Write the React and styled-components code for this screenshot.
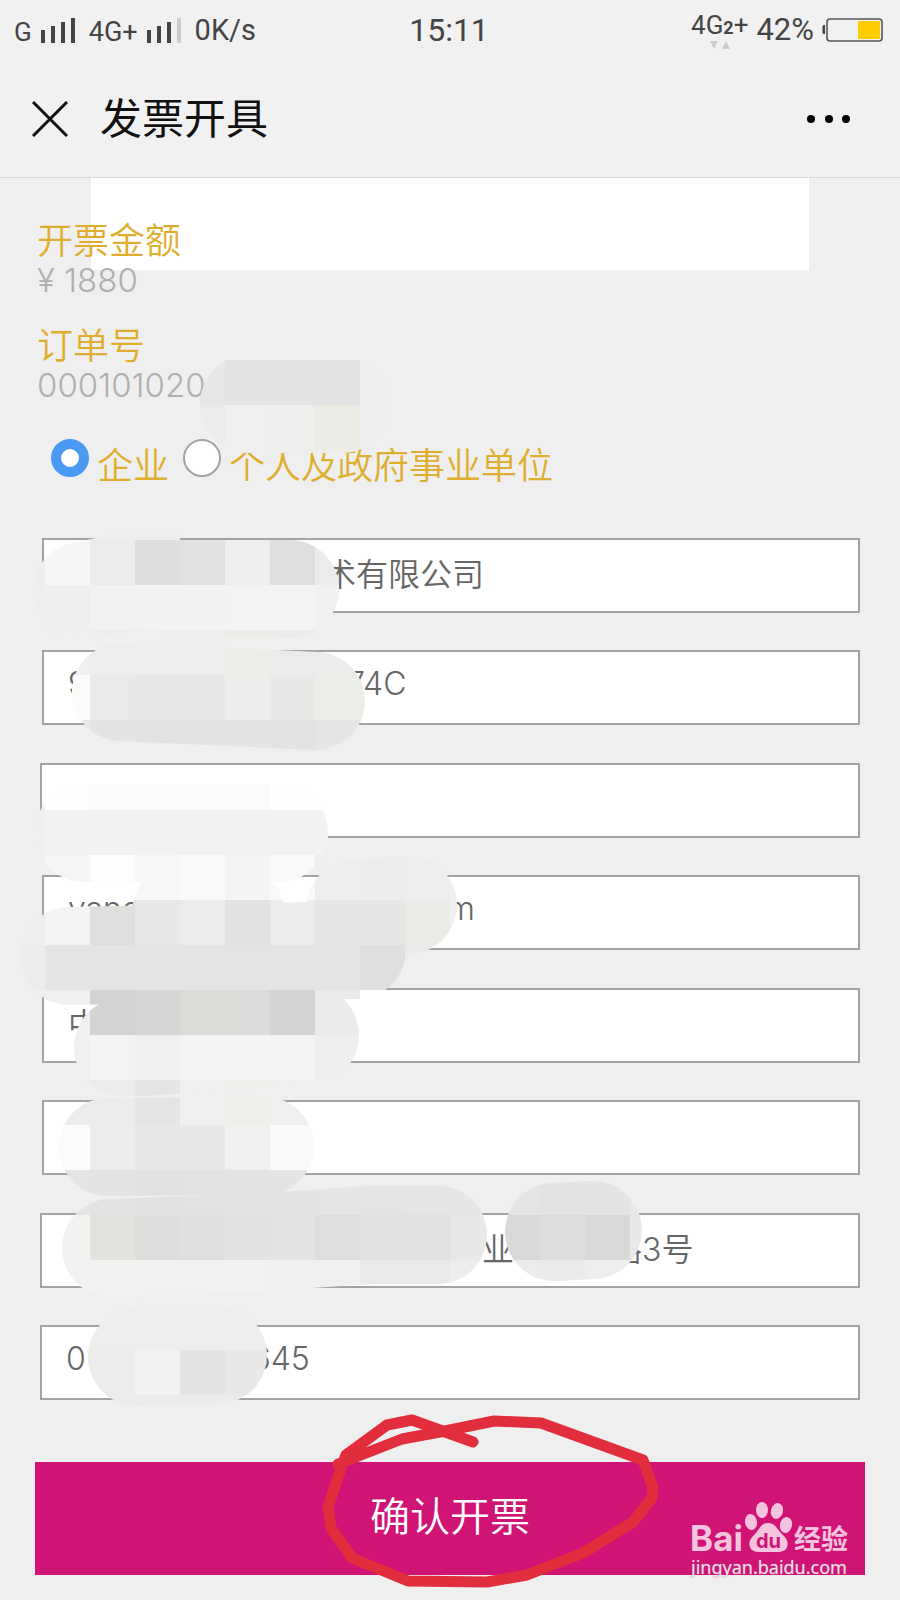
import { useState } from "react";
import styled, { createGlobalStyle } from "styled-components";

const GlobalStyle = createGlobalStyle`
    * { box-sizing: border-box; }
    body {
        margin: 0;
        background: #efefef;
        font-family: Inter, "Noto Sans CJK SC", sans-serif;
        font-weight: 350;
    }
`;

const Screen = styled.div`
    position: relative;
    padding-bottom: 25px;
    overflow: hidden;
`;
const Header = styled.header`
    background: #f1f1f1;
    border-bottom: 1px solid #dcdcdc;
`;
const StatusBar = styled.div`
    display: grid;
    grid-template-columns: 1fr auto 1fr;
    align-items: center;
    height: 60px;
    padding: 0 16px 0 14px;
    font-family: Roboto, sans-serif;
    font-weight: 400;
    color: #444;
`;
const StatusGroup = styled.div`
    display: flex;
    align-items: center;
    justify-content: ${({ $end }) => ($end ? "flex-end" : "flex-start")};
    gap: 8px;
    height: 60px;
`;
const StatusText = styled.span`
    font-size: ${({ $size }) => $size || 26}px;
    line-height: 32px;
    padding-top: ${({ $low }) => ($low ? "4px" : "0")};
`;
const Network = styled.div`
    display: flex;
    flex-direction: column;
    align-items: center;
    font-size: 26px;
    line-height: 26px;
    small { font-size: 18px; font-weight: 700; }
`;
const TitleBar = styled.div`
    display: flex;
    align-items: center;
    height: 117px;
    padding: 0 48px 0 32px;
`;
const IconButton = styled.button`
    display: flex;
    padding: 0;
    border: 0;
    background: none;
    cursor: pointer;
`;
const Title = styled.h1`
    flex: 1;
    margin: 0 0 0 32px;
    font-size: 42px;
    font-weight: 400;
    line-height: 60px;
    color: #111;
`;

const Main = styled.main`
    position: relative;
    padding: 42px 35px 0;
`;
const Banner = styled.div`
    position: absolute;
    top: 0;
    left: 91px;
    right: 91px;
    height: 92px;
    background: #fff;
`;
const Info = styled.dl`
    position: relative;
    margin: 0 0 27px 2px;
`;
const InfoLabel = styled.dt`
    font-size: 36px;
    line-height: 42px;
    color: #e0ae2e;
`;
const InfoValue = styled.dd`
    margin: 0;
    font-size: 33px;
    line-height: 36px;
    color: #b0b0b0;
`;
const TypeGroup = styled.div`
    display: flex;
    gap: 14px;
    margin: 36px 0 51px 16px;
`;
const TypeOption = styled.label`
    display: flex;
    gap: 8px;
    height: 48px;
    font-size: 36px;
    color: #e0ae2e;
    span { line-height: 42px; padding-top: 6px; }
`;
const Radio = styled.input`
    appearance: none;
    width: 38px;
    height: 38px;
    margin: 0;
    border: 2px solid #a3a3a3;
    border-radius: 50%;
    background: #fff;
    &:checked { border: 10px solid #4a9af4; }
`;
const Fields = styled.div`
    display: flex;
    flex-direction: column;
    padding: 0 5px;
`;
const Field = styled.input`
    height: 75px;
    margin: 0 0 37px ${({ $wide }) => ($wide ? "0" : "2px")};
    padding: 0 24px 8px;
    border: 2px solid #a3a3a3;
    border-radius: 0;
    background: #fff;
    font: inherit;
    font-size: 32px;
    color: #666;
    outline: none;
    &:nth-child(even) { margin-bottom: 38px; }
`;
const Submit = styled.button`
    width: 100%;
    height: 113px;
    margin-top: 24px;
    padding: 0 0 10px;
    border: 0;
    background: #cf1475;
    font: inherit;
    font-size: 40px;
    color: #fff;
    cursor: pointer;
`;
const Watermark = styled.div`
    position: absolute;
    right: 44px;
    bottom: -4px;
    width: 166px;
    color: #f6c3df;
    svg { display: block; overflow: visible; }
`;
const WatermarkUrl = styled.div`
    padding-left: 1px;
    font-family: "Noto Sans", sans-serif;
    font-size: 18px;
    font-weight: 400;
    line-height: 24px;
    color: #f9d9ea;
    text-shadow: 0 0 1px #999;
`;
const Overlay = styled.svg`
    position: absolute;
    top: 0;
    left: 0;
    width: 100%;
    pointer-events: none;
`;

const CELL = 45;

// one entry per mosaic row: y, first column, colours from left to right
const mosaic = [
    [360, 4, "e7e7e6 e4e4e4 e4e4e4 e4e4e4 eeeeee"],
    [405, 4, "ebebeb eeefee eeefed ebeae4 eeeeee"],
    [450, 4, "efefef efefef efeeea efeeea efefef"],
    [495, 0, "efefef efefef eeeeec eeeeec"],
    [540, 0, "ededec f6f6f6 ecebea dededd e1e1e0 eeeeed dfdfde ebebeb"],
    [585, 0, "ededed eeeeee f1f1f1 f2f2f2 f2f2f2 f3f3f3 f3f3f3 f0f0f0"],
    [630, 0, "efefef efefef ededed eeeeee eeeeee ecebe8 ecebea ebebeb ebebeb"],
    [675, 1, "fbfbfb e9eae7 e8e9e6 e8e8e6 ecedeb e8e8e6 ecece9 edeceb"],
    [720, 1, "e9e9e9 e4e4e4 e3e3e3 e4e4e4 e4e4e4 e3e3e3 e6e6e6 e6e6e6"],
    [765, 0, "efefef fdfffc fafdf9 fafdf9 fbfbf9 fbfcfa fefefe fefefe"],
    [810, 0, "efefef f2f2f2 f2f2f2 f2f2f2 f2f2f2 f2f2f2 f2f2f2 f2f2f2"],
    [855, 0, "efefef f5f5f5 fdfdfd f5f8f4 f9f9f9 f4f4f4 f9f9f9 ededed ececec ededed eeeeee"],
    [900, 0, "ededed f4f4f4 dfdfdd e7e7e7 ebebe9 e2e2e0 ebebe9 e6e6e4 e6e6e4 e9ebe7 f0f0f0"],
    [945, 0, "ececec e5e5e5 e5e5e5 e5e5e5 e5e5e5 e5e5e5 e5e5e5 e5e5e5 dfdfdf ebebeb eeeeee"],
    [990, 0, "efefef f0f0f0 d3d3d2 d5d6d6 dadcd8 dadcda d3d3d2 eaeae8 ffffff"],
    [1035, 1, "f0f0f0 f3f3f3 f0f0ee f3f3f3 f3f3f3 f3f3f3 eeeeee"],
    [1080, 1, "ebebeb ebebeb e5e5e5 efefef eeeeeb efefef"],
    [1125, 1, "fbfbfb eaedea e8e8e6 e8e8e6 eef1ee fafafa"],
    [1170, 1, "e5e5e5 e4e4e4 e2e2e2 e3e3e3 e4e4e4 e4e4e4 e5e5e5 e5e5e5 e6e6e6 e6e6e6 e5e5e5 e3e3e3 e4e4e4 e9e9e9"],
    [1215, 1, "f2f2f0 e2e2df dededc e0e1de e1e3e0 e2e5e1 dfdfdd e1e1df e1e1df e8e8e6 d9d9d8 dddddb d9d9d8 e8e8e6"],
    [1260, 1, "f1f1f1 f0f2ef f1f1f0 f0f2ef f1f1f1 f0f0f0 f0f0f0 e9e9e8 e9eae7 ececec ebebeb eaeaea ededed eeeeee"],
    [1305, 1, "ededed ededed eeeeee ededed ededed"],
    [1350, 1, "ebebe9 ebebe9 f1f1f1 e3e3e1 e8e8e7"],
    [1395, 1, "ebebeb ebebeb ebebeb ebebeb ebebeb"],
];

const strokes = [
    "M249 404H342",
    "M82 591L140 579L200 588L290 589",
    "M121 692L316 701",
    "M84 833H279",
    "M355 909L408 905",
    "M181 912H235",
    "M69 956L357 950",
    "M123 1047H140L310 1035",
    "M108 1147L265 1146",
    "M111 1248L250 1243L370 1235H438",
    "M554 1232L593 1230",
    "M137 1357L218 1355",
];

const Bars = ({ weak }) => (
    <svg width="41" height="26" viewBox="0 0 41 26">
        <path d="M1 13h4v13h-4zM11 9h4v17h-4zM21 5h4v21h-4z" fill="#444" />
        <path d="M31 1h4v25h-4z" fill={weak ? "#ccc" : "#444"} />
    </svg>
);

const Battery = () => (
    <svg width="62" height="26" viewBox="0 0 62 26">
        <path d="M3 8h-1q-1.500 0-1.500 1.500v6q0 1.500 1.500 1.500h1z" fill="#444" />
        <rect x="5" y="2" width="55" height="22" rx="3" fill="none" stroke="#555" strokeWidth="1.600" />
        <path d="M36 4h22v18h-22z" fill="#fc0" />
    </svg>
);

const BaiduLogo = () => (
    <svg width="166" height="54" viewBox="0 0 166 54" fill="currentColor">
        <text x="0" y="50" fontFamily="Inter, sans-serif" fontWeight="700" fontSize="35">Bai</text>
        <ellipse cx="61" cy="21" rx="6" ry="8" transform="rotate(-10 61 21)" />
        <ellipse cx="72" cy="9" rx="6" ry="8" />
        <ellipse cx="87" cy="10" rx="6" ry="8" transform="rotate(14 87 10)" />
        <ellipse cx="96" cy="24" rx="6" ry="8" transform="rotate(12 96 24)" />
        <path d="M78 22c8 0 10 8 15 12c8 7 5 17-4 17H68c-9 0-12-10-4-17c5-4 6-12 14-12z" />
        <text x="66" y="47" fontFamily="Inter, sans-serif" fontWeight="700" fontSize="20" fill="#cf1475">du</text>
        <text x="104" y="48" fontFamily="Noto Sans CJK SC, sans-serif" fontWeight="700" fontSize="27">经验</text>
    </svg>
);

const Smudges = () => (
    <Overlay viewBox="0 0 900 1600" aria-hidden="true">
        <mask id="smudge" maskUnits="userSpaceOnUse" x="0" y="0" width="900" height="1600">
            {strokes.map((d) => (
                <path key={d} d={d} fill="none" stroke="#fff" strokeWidth="98" strokeLinecap="round" strokeLinejoin="round" />
            ))}
        </mask>
        <g mask="url(#smudge)" shapeRendering="crispEdges">
            {mosaic.map(([y, col, colors]) =>
                colors.split(" ").map((c, i) => (
                    <rect key={y + "-" + i} x={(col + i) * CELL} y={y} width={CELL} height={CELL} fill={"#" + c} />
                ))
            )}
        </g>
        <path
            d="M473 1442L412 1420L387 1425L346 1455L342 1465L328 1507L331 1528L352 1558L408 1581L487 1582L527 1575L583 1553L633 1522L652 1498L653 1488L643 1460L541 1423L494 1421L445 1431L402 1439L338 1464"
            fill="none"
            stroke="#e12d3c"
            strokeWidth="11"
            strokeLinecap="round"
            strokeLinejoin="round"
        />
    </Overlay>
);

// redacted characters are kept as blanks
const blank = (n, wide) => (wide ? "\u3000" : "\u2007").repeat(n);

const initialFields = [
    { name: "公司名称", value: blank(8, true) + "术有限公司" },
    { name: "税号", value: "9" + blank(11) + "\u2002\u2002" + "74C" },
    { name: "电话", value: "", wide: true },
    { name: "邮箱", value: "yang" + blank(14) + "\u2002" + "m" },
    { name: "开户行", value: "中" },
    { name: "银行账号", value: "" },
    { name: "地址", value: blank(13, true) + "业" + blank(3, true) + "路3号", wide: true },
    { name: "联系电话", value: "0" + blank(8) + "645", wide: true },
];

const App = () => {
    const [type, setType] = useState("company");
    const [fields, setFields] = useState(initialFields);

    const handleChange = (index, value) => {
        setFields(fields.map((f, i) => (i === index ? { ...f, value } : f)));
    };

    return (
        <Screen>
            <GlobalStyle />
            <Header>
                <StatusBar>
                    <StatusGroup>
                        <StatusText $size={26} $low>G</StatusText>
                        <Bars />
                        <StatusText $size={27} $low>4G+</StatusText>
                        <Bars weak />
                        <StatusText $size={29}>0K/s</StatusText>
                    </StatusGroup>
                    <StatusText $size={32}>15:11</StatusText>
                    <StatusGroup $end>
                        <Network>
                            <span>4G<small>2</small>+</span>
                            <svg width="22" height="8" viewBox="0 0 22 8" fill="#ccc">
                                <path d="M1 0h8l-4 8zM13 8h8l-4-8z" />
                            </svg>
                        </Network>
                        <StatusText $size={31}>42%</StatusText>
                        <Battery />
                    </StatusGroup>
                </StatusBar>
                <TitleBar>
                    <IconButton aria-label="关闭">
                        <svg width="36" height="36" viewBox="0 0 36 36" stroke="#111" strokeWidth="3">
                            <path d="M1 1L35 35M35 1L1 35" />
                        </svg>
                    </IconButton>
                    <Title>发票开具</Title>
                    <IconButton aria-label="更多">
                        <svg width="46" height="10" viewBox="0 0 46 10">
                            <circle cx="5" cy="5" r="4" />
                            <circle cx="23" cy="5" r="4" />
                            <circle cx="40" cy="5" r="4" />
                        </svg>
                    </IconButton>
                </TitleBar>
            </Header>
            <Main>
                <Banner />
                <Info>
                    <InfoLabel>开票金额</InfoLabel>
                    <InfoValue>¥ 1880</InfoValue>
                </Info>
                <Info>
                    <InfoLabel>订单号</InfoLabel>
                    <InfoValue>000101020</InfoValue>
                </Info>
                <TypeGroup role="radiogroup">
                    <TypeOption>
                        <Radio type="radio" name="type" checked={type === "company"} onChange={() => setType("company")} />
                        <span>企业</span>
                    </TypeOption>
                    <TypeOption>
                        <Radio type="radio" name="type" checked={type === "person"} onChange={() => setType("person")} />
                        <span>个人及政府事业单位</span>
                    </TypeOption>
                </TypeGroup>
                <Fields>
                    {fields.map((f, i) => (
                        <Field
                            key={f.name}
                            aria-label={f.name}
                            $wide={f.wide}
                            value={f.value}
                            onChange={(e) => handleChange(i, e.target.value)}
                        />
                    ))}
                </Fields>
                <Submit>确认开票</Submit>
                <Watermark>
                    <BaiduLogo />
                    <WatermarkUrl>jingyan.baidu.com</WatermarkUrl>
                </Watermark>
            </Main>
            <Smudges />
        </Screen>
    );
};

export default App;
